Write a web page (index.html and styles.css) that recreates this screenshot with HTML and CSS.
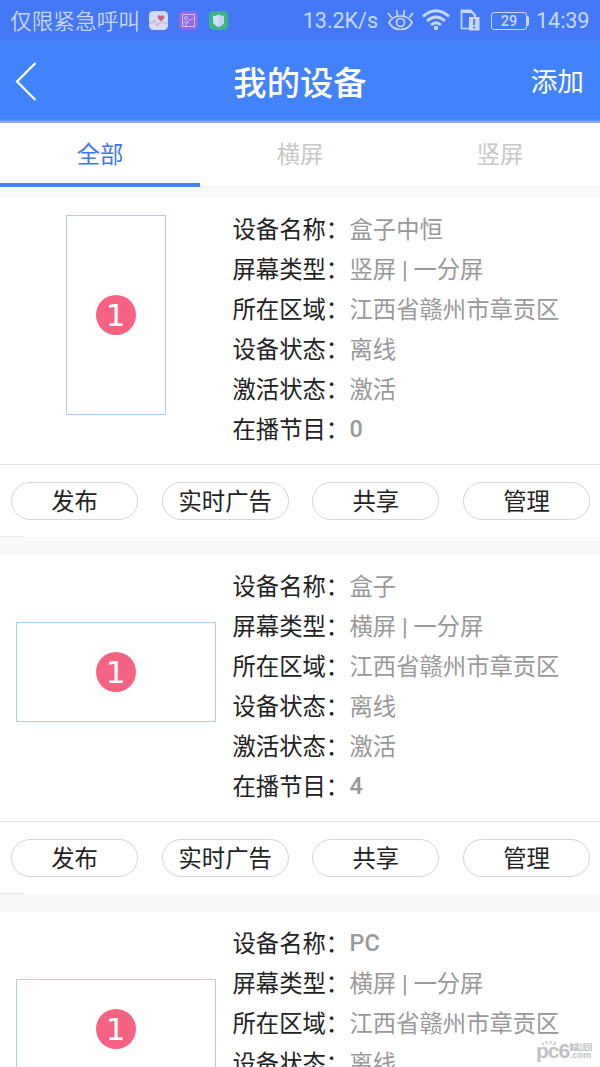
FILE: index.html
```html
<!DOCTYPE html>
<html lang="zh-CN">
<head>
<meta charset="utf-8">
<title>我的设备</title>
<link rel="stylesheet" href="styles.css">
</head>
<body>
<div class="status">
  <span class="carrier">仅限紧急呼叫</span>
  <svg class="app" width="19" height="19" viewBox="0 0 19 19"><rect width="19" height="19" rx="4.500" fill="#d2dcfb"/><path d="M12 10.500 9 7.500C7.500 5 10.500 3.200 12 5 13.500 3.200 16.500 5 15 7.500Z" fill="#c46581"/><path d="M0 12h4l1.500-3 2.500 6 1.500-3h3l1-1 1 1H19" fill="none" stroke="#dc9bb5"/></svg>
  <svg class="app" width="19" height="19" viewBox="0 0 19 19"><rect width="19" height="19" rx="4.500" fill="#9269e4"/><g fill="none" stroke="#cfc2f7"><rect x="3.500" y="3.500" width="12" height="12"/><circle cx="7" cy="7" r="1.500"/><path d="M6.500 15.500Q7 10 14 7.500M4 12l3-1.500 2.500 2"/></g></svg>
  <svg class="app" width="19" height="19" viewBox="0 0 19 19"><rect width="19" height="19" rx="4.500" fill="#3cb581"/><path d="M9.500 3.500q2.500 1.500 5.500 1.500v5q0 4-5.500 6Q4 14 4 10V5q3 0 5.500-1.500Z" fill="#d2dffa"/><path d="M9.500 3.500q2.500 1.500 5.500 1.500v5q0 4-5.500 6Z" fill="#bfd3f2"/></svg>
  <span class="speed">13.2K/s</span>
  <svg class="eye" width="27" height="22" viewBox="0 0 27 22" fill="none" stroke="#c9d7fd" stroke-width="1.700"><path d="M2 13.500Q5.500 7 13.500 7T25 13.500Q21.500 20.500 13.500 20.500T2 13.500Z"/><circle cx="13.500" cy="13.500" r="4"/><path d="m1 4 3.500 4.500M9.500 1l1 6M17.500 1l-1 6M26 4l-3.500 4.500"/></svg>
  <svg class="wifi" width="28" height="22" viewBox="0 0 28 22" fill="none" stroke="#c9d7fd" stroke-width="2.800"><path d="M1 7.500Q14-4 27 7.500M5 12q9-8 18 0M9 16q5-4.500 10 0"/><circle cx="14" cy="19" r="2.200" fill="#c9d7fd" stroke="none"/></svg>
  <svg class="sim" width="20" height="22" viewBox="0 0 20 22"><path d="M9 19.500H1.500V1.500" fill="none" stroke="#c9d7fd" stroke-width="1.700"/><path d="M.700.500H11L16 5.500V8h3.500v13.500H9V8h5V6.500L11.500 4H.700Z" fill="#c9d7fd"/><path d="M14.200 10v6m0 1.500v2" stroke="#4578f6" stroke-width="1.800"/></svg>
  <span class="battery">29</span>
  <span class="clock">14:39</span>
</div>
<header class="header">
  <svg class="back" width="22" height="40" viewBox="0 0 22 40"><path d="M20.500 1 2 19.500 20.500 38" fill="none" stroke="#fff" stroke-width="2.200"/></svg>
  <h1 class="title">我的设备</h1>
  <span class="add">添加</span>
</header>
<nav class="tabs">
  <span class="tab tab-active">全部</span>
  <span class="tab">横屏</span>
  <span class="tab">竖屏</span>
</nav>
<main class="list">
  <section class="card">
    <div class="info">
      <div class="preview"><div class="screen portrait"><span class="zone">1</span></div></div>
      <dl class="fields">
        <dt>设备名称：</dt><dd>盒子中恒</dd>
        <dt>屏幕类型：</dt><dd>竖屏 | 一分屏</dd>
        <dt>所在区域：</dt><dd>江西省赣州市章贡区</dd>
        <dt>设备状态：</dt><dd>离线</dd>
        <dt>激活状态：</dt><dd>激活</dd>
        <dt>在播节目：</dt><dd class="latin">0</dd>
      </dl>
    </div>
    <div class="actions"><span class="pill">发布</span><span class="pill">实时广告</span><span class="pill">共享</span><span class="pill">管理</span></div>
  </section>
  <section class="card">
    <div class="info">
      <div class="preview"><div class="screen landscape"><span class="zone">1</span></div></div>
      <dl class="fields">
        <dt>设备名称：</dt><dd>盒子</dd>
        <dt>屏幕类型：</dt><dd>横屏 | 一分屏</dd>
        <dt>所在区域：</dt><dd>江西省赣州市章贡区</dd>
        <dt>设备状态：</dt><dd>离线</dd>
        <dt>激活状态：</dt><dd>激活</dd>
        <dt>在播节目：</dt><dd class="latin">4</dd>
      </dl>
    </div>
    <div class="actions"><span class="pill">发布</span><span class="pill">实时广告</span><span class="pill">共享</span><span class="pill">管理</span></div>
  </section>
  <section class="card">
    <div class="info">
      <div class="preview"><div class="screen landscape"><span class="zone">1</span></div></div>
      <dl class="fields">
        <dt>设备名称：</dt><dd class="latin">PC</dd>
        <dt>屏幕类型：</dt><dd>横屏 | 一分屏</dd>
        <dt>所在区域：</dt><dd>江西省赣州市章贡区</dd>
        <dt>设备状态：</dt><dd>离线</dd>
      </dl>
    </div>
  </section>
</main>
<div class="watermark">
  <svg class="rays" width="16" height="5" viewBox="0 0 16 5"><path d="m1 2 2 2M5 0l1 3M10 0 9 3M15 1l-3 3" stroke="#c0c2c8" stroke-width="1.400"/></svg>
  <span class="mark">pc6</span>
  <span class="side"><span class="badge">下载站</span><span class="com">.com</span></span>
</div>
</body>
</html>
```
FILE: styles.css
```css
* { box-sizing: border-box; }
body {
  margin: 0;
  width: 600px;
  height: 1067px;
  overflow: hidden;
  position: relative;
  background: #f8f8f8;
  font-family: Roboto, "Noto Sans CJK SC", sans-serif;
  font-size: 23.33px;
  color: #222;
}
svg { display: block; flex: none; }
.status {
  display: flex;
  align-items: center;
  height: 40px;
  padding: 0 10px;
  background: #4578f6;
  color: #c9d7fd;
  white-space: nowrap;
}
.carrier { width: 139px; font-size: 21.67px; font-weight: 350; line-height: 40px; padding-top: 3px; }
.app { margin-right: 11px; }
.speed { margin-left: auto; font-size: 21.67px; letter-spacing: -0.1px; padding-top: 1px; }
.eye { margin-left: 9px; }
.wifi { margin-left: 8px; }
.sim { margin-left: 10px; }
.battery {
  position: relative;
  width: 36px;
  height: 18px;
  margin: 2px 0 0 11px;
  border: 1px solid #c9d7fd;
  border-radius: 3px;
  font-size: 14.500px;
  font-weight: 500;
  line-height: 17px;
  text-align: center;
}
.battery::after {
  content: "";
  position: absolute;
  right: -3px;
  top: 3px;
  width: 2px;
  height: 10px;
  border-radius: 0 2px 2px 0;
  background: #c9d7fd;
}
.clock { margin-left: 9px; font-size: 21.67px; padding-top: 1px; width: 54px; letter-spacing: -0.1px; }
.header {
  display: grid;
  grid-template-columns: 100px 1fr 100px;
  align-items: center;
  height: 83px;
  padding: 0 15px;
  background: linear-gradient(#4282fb 79px, #9bbcfd 83px);
  color: #fff;
}
.title { margin: 0; text-align: center; font-size: 33.33px; font-weight: 500; line-height: 80px; padding-top: 4px; }
.add { text-align: right; font-size: 26.67px; line-height: 76px; margin: -1px 1px 0 0; }
.tabs {
  display: grid;
  grid-template-columns: repeat(3, 1fr);
  height: 64px;
  background: #fff;
  border-bottom: 1px solid #f5f5f5;
}
.tab { height: 64px; text-align: center; line-height: 64px; color: #c8c8c8; }
.tab-active { color: #4275f5; border-bottom: 4px solid #4285fa; }
.list { display: flex; flex-direction: column; gap: 18px; padding-top: 11px; }
.card { background: #fff; }
.info { display: flex; height: 266px; }
.preview { display: flex; width: 232px; height: 234px; align-items: center; justify-content: center; }
.screen { display: flex; align-items: center; justify-content: center; border: 1px solid #aecbff; }
.portrait { width: 100px; height: 200px; }
.landscape { width: 200px; height: 100px; }
.zone {
  width: 40px;
  height: 40px;
  border-radius: 50%;
  background: #f66282;
  color: #fff;
  font: 31px/41px "DejaVu Sans", sans-serif;
  text-align: center;
  text-indent: -1px;
}
.fields {
  display: grid;
  grid-template-columns: 117px 1fr;
  grid-auto-rows: 40px;
  flex: 1;
  margin: 0;
  padding: 12px 0 0 0.5px;
  line-height: 40px;
  white-space: nowrap;
}
.fields dd { margin: 0; color: #999; }
.fields .latin { margin-top: -1px; font-weight: 500; }
.actions {
  display: flex;
  justify-content: space-between;
  height: 73px;
  padding: 17px 10px 0 11px;
  border-top: 1px solid #e2e2e2;
  background: linear-gradient(#e6e6e6, #e6e6e6) 0 100% / 24px 1px no-repeat;
}
.pill {
  width: 127px;
  height: 38px;
  border: 1px solid #d6d6d6;
  border-radius: 19px;
  text-align: center;
  line-height: 38px;
}
.watermark {
  position: absolute;
  left: 536px;
  top: 1040px;
  display: flex;
  align-items: center;
  height: 22px;
  color: #c0c2c8;
}
.rays { position: absolute; left: 5px; top: 1px; }
.mark { width: 34px; font: bold 21px/22px "Liberation Sans", sans-serif; letter-spacing: -1px; }
.side { display: flex; flex-direction: column; }
.badge { width: 22px; height: 8px; background: #c6c8cc; color: #fff; font-size: 7px; line-height: 8px; text-align: center; }
.com { font: bold 9px/9px "Liberation Sans", sans-serif; }
```
